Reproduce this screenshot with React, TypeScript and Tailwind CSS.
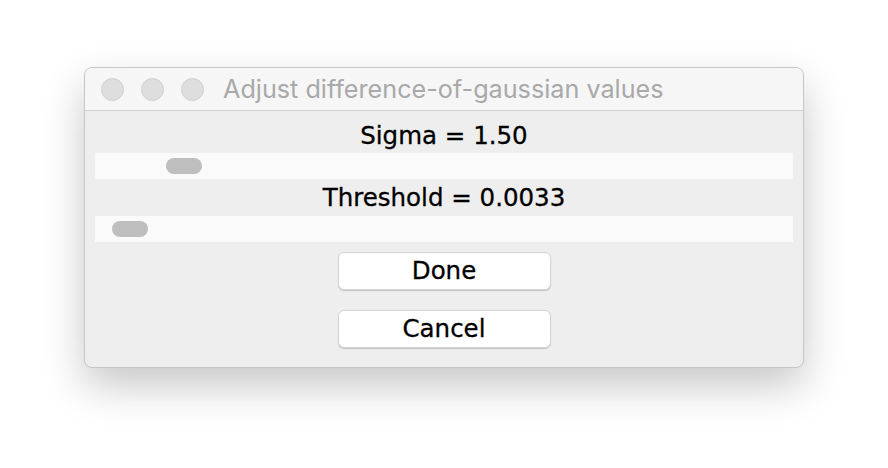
import React from 'react';

const Slider: React.FC<{ pos: number }> = ({ pos }) => (
  <div className="mx-[10px] h-[26px] bg-[#fafafa] flex items-center">
    <div className="h-4 w-9 rounded-full bg-[#bebebe]" style={{ marginLeft: `${pos}px` }} />
  </div>
);

const Button: React.FC<{ label: string }> = ({ label }) => (
  <button className="w-[213px] h-[38px] rounded-[6px] bg-white border border-[#d4d4d4] shadow-[0_1px_1px_rgba(0,0,0,0.18)] text-[24.5px] leading-none text-black font-['DejaVu_Sans',sans-serif] [-webkit-text-stroke:0.3px_black]">
    {label}
  </button>
);

export default function App() {
  return (
    <div className="w-[888px] h-[468px] bg-white flex justify-center pt-[67px]">
      <div className="w-[720px] h-[301px] rounded-[8px] border border-[#c6c6c6] bg-[#eeeeee] shadow-[0_18px_40px_rgba(0,0,0,0.22)] overflow-hidden flex flex-col">
        <div className="h-[43px] shrink-0 bg-[#f6f6f6] border-b border-[#d2d2d2] flex items-center pl-[16px]">
          <div className="flex gap-[17px]">
            <span className="w-[23px] h-[23px] rounded-full bg-[#dedede] border border-[#d0d0d0]" />
            <span className="w-[23px] h-[23px] rounded-full bg-[#dedede] border border-[#d0d0d0]" />
            <span className="w-[23px] h-[23px] rounded-full bg-[#dedede] border border-[#d0d0d0]" />
          </div>
          <span className="ml-[19px] pt-[2px] text-[25.2px] text-[#a9a9a9] font-['Inter',sans-serif]">
            Adjust difference-of-gaussian values
          </span>
        </div>
        <div className="flex flex-col font-['DejaVu_Sans',sans-serif] text-black [-webkit-text-stroke:0.3px_black]">
          <div className="h-[42px] pt-[8px] flex items-center justify-center text-[24.5px]">Sigma = 1.50</div>
          <Slider pos={71} />
          <div className="h-[37px] pt-[1px] flex items-center justify-center text-[24.5px]">Threshold = 0.0033</div>
          <Slider pos={17} />
          <div className="flex flex-col items-center gap-[20px] mt-[10px]">
            <Button label="Done" />
            <Button label="Cancel" />
          </div>
        </div>
      </div>
    </div>
  );
}
